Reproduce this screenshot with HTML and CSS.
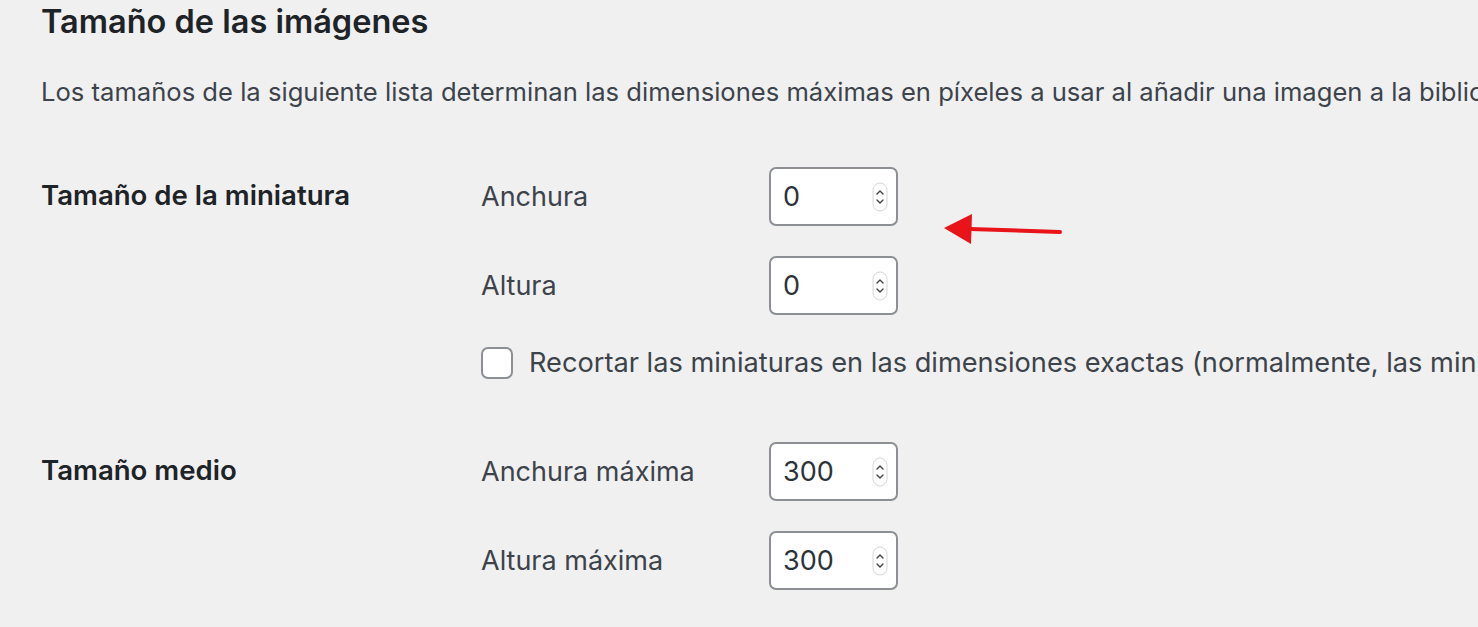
FILE: index.html
```html
<!DOCTYPE html>
<html lang="es">
<head>
  <meta charset="UTF-8">
  <title>Ajustes de medios</title>
  <link rel="stylesheet" href="styles.css">
</head>
<body>
  <div class="wrap">
    <h2>Tamaño de las imágenes</h2>
    <p class="intro">Los tamaños de la siguiente lista determinan las dimensiones máximas en píxeles a usar al añadir una imagen a la biblioteca de medios.</p>

    <div class="form-table">
      <div class="row">
        <div class="th">Tamaño de la miniatura</div>
        <div class="td">
          <div class="size-line">
            <label for="thumb_w">Anchura</label>
            <span class="num-field">
              <input type="text" id="thumb_w" value="0">
              <svg class="spin" width="16" height="30" viewBox="0 0 16 30"><rect x="1" y="1" width="14" height="28" rx="7" fill="#fff" stroke="#d6d6d8"/><path d="M5 12 L8 9 L11 12" fill="none" stroke="#3c434a" stroke-width="1.4" stroke-linecap="round" stroke-linejoin="round"/><path d="M5 18 L8 21 L11 18" fill="none" stroke="#3c434a" stroke-width="1.4" stroke-linecap="round" stroke-linejoin="round"/></svg>
            </span>
          </div>
          <div class="size-line">
            <label for="thumb_h">Altura</label>
            <span class="num-field">
              <input type="text" id="thumb_h" value="0">
              <svg class="spin" width="16" height="30" viewBox="0 0 16 30"><rect x="1" y="1" width="14" height="28" rx="7" fill="#fff" stroke="#d6d6d8"/><path d="M5 12 L8 9 L11 12" fill="none" stroke="#3c434a" stroke-width="1.4" stroke-linecap="round" stroke-linejoin="round"/><path d="M5 18 L8 21 L11 18" fill="none" stroke="#3c434a" stroke-width="1.4" stroke-linecap="round" stroke-linejoin="round"/></svg>
            </span>
          </div>
          <label class="check-line">
            <span class="checkbox"></span>
            Recortar las miniaturas en las dimensiones exactas (normalmente, las miniaturas son proporcionales)
          </label>
        </div>
      </div>

      <div class="row">
        <div class="th">Tamaño medio</div>
        <div class="td">
          <div class="size-line">
            <label for="medium_w">Anchura máxima</label>
            <span class="num-field">
              <input type="text" id="medium_w" value="300">
              <svg class="spin" width="16" height="30" viewBox="0 0 16 30"><rect x="1" y="1" width="14" height="28" rx="7" fill="#fff" stroke="#d6d6d8"/><path d="M5 12 L8 9 L11 12" fill="none" stroke="#3c434a" stroke-width="1.4" stroke-linecap="round" stroke-linejoin="round"/><path d="M5 18 L8 21 L11 18" fill="none" stroke="#3c434a" stroke-width="1.4" stroke-linecap="round" stroke-linejoin="round"/></svg>
            </span>
          </div>
          <div class="size-line">
            <label for="medium_h">Altura máxima</label>
            <span class="num-field">
              <input type="text" id="medium_h" value="300">
              <svg class="spin" width="16" height="30" viewBox="0 0 16 30"><rect x="1" y="1" width="14" height="28" rx="7" fill="#fff" stroke="#d6d6d8"/><path d="M5 12 L8 9 L11 12" fill="none" stroke="#3c434a" stroke-width="1.4" stroke-linecap="round" stroke-linejoin="round"/><path d="M5 18 L8 21 L11 18" fill="none" stroke="#3c434a" stroke-width="1.4" stroke-linecap="round" stroke-linejoin="round"/></svg>
            </span>
          </div>
        </div>
      </div>
    </div>
  </div>

  <!-- annotation arrow -->
  <svg class="arrow" width="130" height="40" viewBox="0 0 130 40">
    <path d="M26 18 L116 21" stroke="#e8141a" stroke-width="4" stroke-linecap="round"/>
    <path d="M0 17 L28 3 L27 33 Z" fill="#e8141a"/>
  </svg>
</body>
</html>
```

FILE: styles.css
```css
body {
  margin: 0;
  background: #f0f0f1;
  color: #3c434a;
  font-family: Inter, "Noto Sans", sans-serif;
  overflow: hidden;
}

.wrap {
  padding-left: 41px;
  white-space: nowrap;
}

h2 {
  margin: 0;
  padding-top: 2px;
  font-size: 32.5px;
  line-height: 40px;
  font-weight: 600;
  color: #1d2327;
}

.intro {
  margin: 33px 0 0 0;
  font-size: 25.6px;
  line-height: 34px;
}

.form-table {
  margin-top: 58px;
}

.row {
  display: grid;
  grid-template-columns: 440px 1fr;
  margin-bottom: 63px;
}

.th {
  padding-top: 12px;
  font-size: 27.6px;
  line-height: 32px;
  font-weight: 600;
  color: #1d2327;
}

.td {
  display: flex;
  flex-direction: column;
  gap: 30px;
}

.size-line {
  display: flex;
  align-items: center;
}

.size-line label {
  width: 288px;
  font-size: 27px;
}

.num-field {
  display: flex;
  align-items: center;
  box-sizing: border-box;
  width: 129px;
  height: 59px;
  padding: 0 8px 0 12px;
  background: #fff;
  border: 2px solid #8c8f94;
  border-radius: 7px;
}

.num-field input {
  flex: 1;
  min-width: 0;
  border: none;
  outline: none;
  padding: 0;
  background: transparent;
  font-family: inherit;
  font-size: 27px;
  color: #2c3338;
}

.check-line {
  display: flex;
  align-items: center;
  gap: 16px;
  margin-top: 1px;
  font-size: 27.2px;
}

.checkbox {
  flex: none;
  box-sizing: border-box;
  width: 32px;
  height: 32px;
  background: #fff;
  border: 2px solid #8c8f94;
  border-radius: 7px;
}

.arrow {
  position: absolute;
  left: 944px;
  top: 211px;
}
```
